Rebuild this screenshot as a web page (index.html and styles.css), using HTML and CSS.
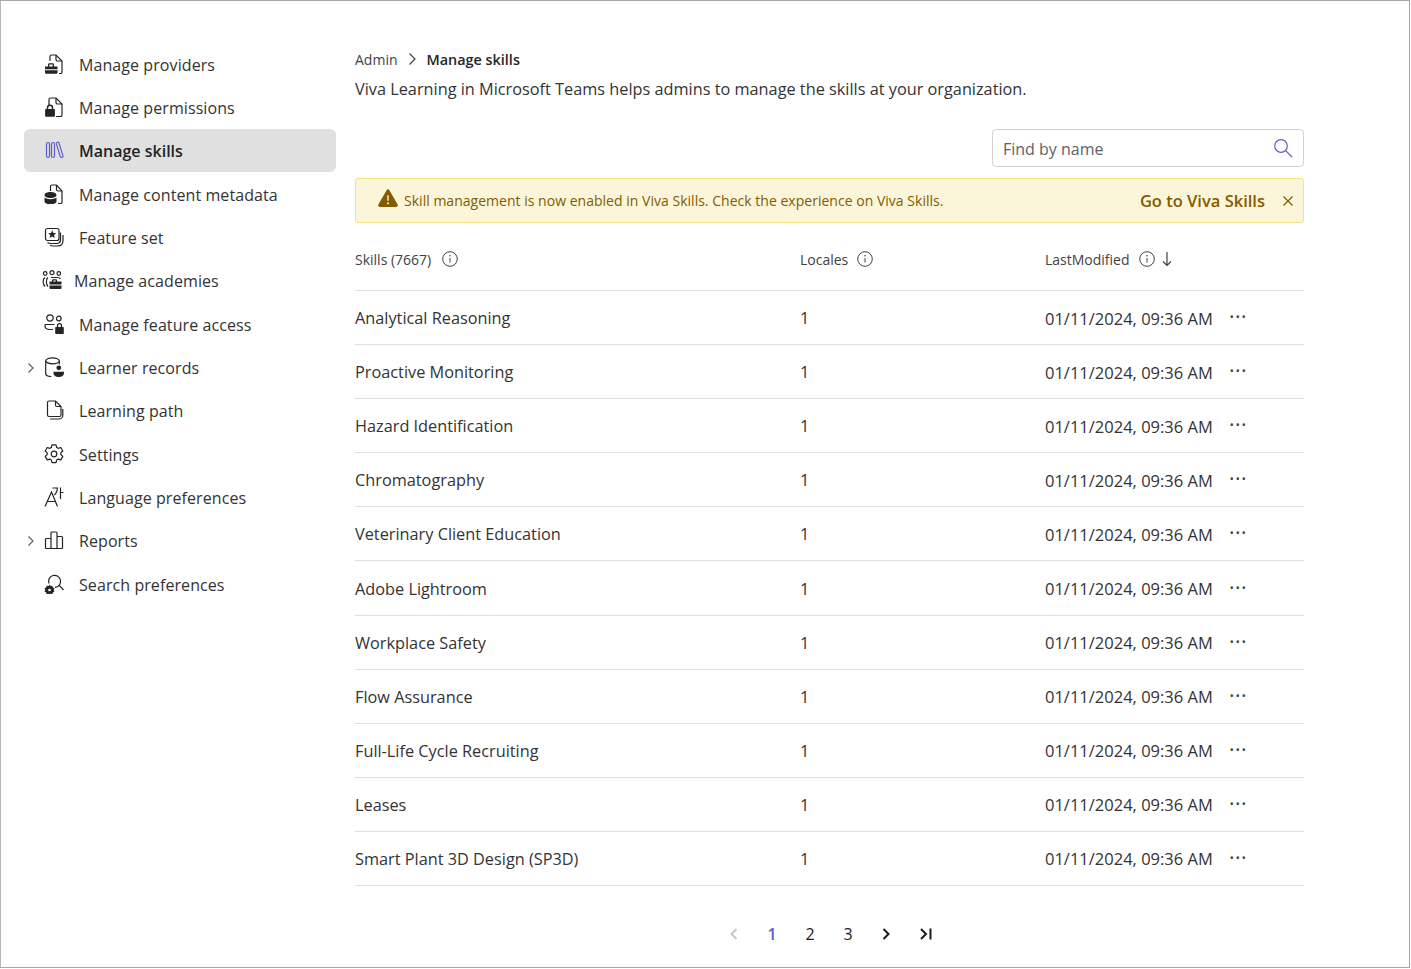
FILE: index.html
```html
<!DOCTYPE html>
<html lang="en">
<head>
  <meta charset="UTF-8">
  <title>Manage skills</title>
  <link rel="stylesheet" href="styles.css">
</head>
<body>
  <div class="frame">
    <nav class="sidebar">
      <a class="nav-item">
        <svg class="nav-icon" viewBox="0 0 20 20"><path d="M6 7V2.500A1.500 1.500 0 0 1 7.500 1H12l6 6v11a1.500 1.500 0 0 1-1.500 1.500H15"/><path d="M12 1v4.500a1.500 1.500 0 0 0 1.500 1.500H18"/><path class="solid" d="M1 12.500h3V10.500a1.200 1.200 0 0 1 1.200-1.200h3.600A1.200 1.200 0 0 1 10 10.500v2h3.500v2.800H1zM1 16.300h12.500V18.500a1.200 1.200 0 0 1-1.200 1.200H2.200A1.200 1.200 0 0 1 1 18.500zM5.300 10.600v1.900h3.400v-1.900z"/></svg>
        Manage providers
      </a>
      <a class="nav-item">
        <svg class="nav-icon" viewBox="0 0 20 20"><path d="M5 8V2.500A1.500 1.500 0 0 1 6.500 1H12l6 6v11a1.500 1.500 0 0 1-1.500 1.500H12"/><path d="M12 1v4.500a1.500 1.500 0 0 0 1.500 1.500H18"/><path d="M3.500 12v-1.200a2.500 2.500 0 0 1 5 0V12" stroke-width="1.500"/><path class="solid" d="M2 12h8a.9.9 0 0 1 .9.9v5.900a.9.9 0 0 1-.9.9H2a.9.9 0 0 1-.9-.9v-5.900A.9.9 0 0 1 2 12z"/></svg>
        Manage permissions
      </a>
      <a class="nav-item is-active">
        <svg class="nav-icon" viewBox="0 0 20 20"><rect x="2.500" y="2.500" width="3" height="15" rx="1.500"/><rect x="7.500" y="2.500" width="3" height="15" rx="1.500"/><path d="M12.300 3.700a1.400 1.400 0 0 1 2.600-.8l4 12.700a1.400 1.400 0 0 1-2.700.8z"/></svg>
        Manage skills
      </a>
      <a class="nav-item">
        <svg class="nav-icon" viewBox="0 0 20 20"><path d="M6.500 7V2.500A1.500 1.500 0 0 1 8 1h4.500l5.500 6v11a1.500 1.500 0 0 1-1.500 1.500H14"/><path d="M12.500 1v4.500A1.500 1.500 0 0 0 14 7h4"/><path class="solid" d="M.5 11c0-1.700 2.700-3 6-3s6 1.300 6 3-2.700 3-6 3-6-1.300-6-3zM.5 13.500c1.400 1.100 3.600 1.700 6 1.700s4.600-.6 6-1.700V17.500c0 1.700-2.700 2.800-6 2.800s-6-1.100-6-2.800z"/></svg>
        Manage content metadata
      </a>
      <a class="nav-item">
        <svg class="nav-icon" viewBox="0 0 20 20"><rect x="1.500" y="1.500" width="13.500" height="12" rx="2"/><path d="M3.500 15.500c1 .8 2 1 3 1h6c2.500 0 4-1.500 4-4V5.500"/><path d="M6 18.300c1 .5 2 .7 3 .7h4.500c3.500 0 5.500-2 5.500-5.500V8"/><path class="solid" d="M8.200 3.300l1.200 2.700 2.800.2-2.100 1.900.6 2.800-2.500-1.500-2.500 1.500.6-2.800-2.100-1.900 2.800-.2z"/></svg>
        Feature set
      </a>
      <a class="nav-item nav-item-tight">
        <svg class="nav-icon" viewBox="0 0 20 20" stroke-width="1"><circle cx="3.200" cy="3.500" r="1.800"/><circle cx="10" cy="2.700" r="2"/><circle cx="16.800" cy="3.500" r="1.800"/><path d="M3 7.500C.5 9 .5 14 3 16.500M6 7.500c-2.200 1.500-2.200 6.500 0 9"/><path d="M9 7.500h6c1.500 0 3 .5 3.500 1.500"/><path class="solid" d="M7.500 11.500H10V10.300a1 1 0 0 1 1-1h3a1 1 0 0 1 1 1v1.200h4.500v3h-12zM7.500 15.500h12V18a1 1 0 0 1-1 1h-10a1 1 0 0 1-1-1zM11.200 10.400v1.100h2.600v-1.100z"/></svg>
        Manage academies
      </a>
      <a class="nav-item">
        <svg class="nav-icon" viewBox="0 0 20 20"><circle cx="6" cy="4" r="3.200"/><circle cx="14.800" cy="4.500" r="2.300"/><path d="M1 10.500h9.500M1 10.500v1.200c0 2.300 2.200 3.800 5 3.800h3"/><path d="M13.500 13v-1.300a2 2 0 0 1 4 0V13" stroke-width="1.300"/><path class="solid" d="M12 13h7a.8.800 0 0 1 .8.8v5.400a.8.800 0 0 1-.8.8h-7a.8.800 0 0 1-.8-.8v-5.400A.8.800 0 0 1 12 13z"/></svg>
        Manage feature access
      </a>
      <a class="nav-item">
        <svg class="nav-caret" viewBox="0 0 8 12"><path d="M1.500 1.500L6 6l-4.500 4.500"/></svg>
        <svg class="nav-icon" viewBox="0 0 20 20"><ellipse cx="8.500" cy="3.800" rx="6.800" ry="3"/><path d="M1.700 3.800v12.700c0 1.800 2.500 3 5.500 3M15.300 3.800v3.700"/><circle class="solid" cx="14.800" cy="10.800" r="2.400"/><path class="solid" d="M9.500 14.800h10.500V16c0 2.500-2.200 4-5.200 4s-5.300-1.500-5.300-4z"/></svg>
        Learner records
      </a>
      <a class="nav-item">
        <svg class="nav-icon" viewBox="0 0 20 20"><path d="M3.500 2.500A1.500 1.500 0 0 1 5 1h6.500l5.500 5.500V15a1.500 1.500 0 0 1-1.500 1.500H5A1.500 1.500 0 0 1 3.500 15z"/><path d="M11.500 1v4A1.500 1.500 0 0 0 13 6.500h4"/><path d="M6 19h9c2 0 3.800-1.600 3.800-3.800V9"/></svg>
        Learning path
      </a>
      <a class="nav-item">
        <svg class="nav-icon" viewBox="0 0 20 20"><circle cx="10" cy="10" r="2.800"/><path d="M8 .8h4l.7 2.700 1.400.8 2.700-.8 2 3.500-2 1.900v1.600l2 1.900-2 3.500-2.700-.8-1.400.8-.7 2.700H8l-.7-2.700-1.400-.8-2.700.8-2-3.500 2-1.900V8.900l-2-1.900 2-3.500 2.700.8 1.400-.8z" stroke-linejoin="round"/></svg>
        Settings
      </a>
      <a class="nav-item">
        <svg class="nav-icon" viewBox="0 0 20 20"><path d="M1 19.500L7.500 5l6 14.500M3.300 14.500h8.500"/><path d="M8.500 1h4.800c0 3-1 5.500-3 7M16.500 .5V12M16.500 5.500H19.500"/></svg>
        Language preferences
      </a>
      <a class="nav-item">
        <svg class="nav-caret" viewBox="0 0 8 12"><path d="M1.500 1.500L6 6l-4.500 4.500"/></svg>
        <svg class="nav-icon" viewBox="0 0 20 20"><path d="M1.500 18.500h17M1.500 18.500V9.500a1 1 0 0 1 1-1h4.500v10M7 18.500V3a1 1 0 0 1 1-1h4a1 1 0 0 1 1 1v15.500M13 6.500h4.500a1 1 0 0 1 1 1v11"/></svg>
        Reports
      </a>
      <a class="nav-item">
        <svg class="nav-icon" viewBox="0 0 20 20"><path d="M5 9.500A6 6 0 1 1 11 13.300"/><path d="M15 11.200l4.500 4.800"/><path class="solid" d="M5.500 10.500l1 1.500 1.800-.3.600 1.700 1.600.9-.8 1.600.8 1.600-1.600.9-.6 1.700-1.800-.3-1 1.200-1-1.200-1.800.3-.6-1.700-1.600-.9.800-1.600-.8-1.600 1.600-.9.600-1.700 1.800.3z"/><circle cx="5.500" cy="16" r="1.300" fill="#fff" stroke="none"/></svg>
        Search preferences
      </a>
    </nav>

    <main class="content">
      <div class="breadcrumb">
        <span>Admin</span>
        <svg class="crumb-sep" viewBox="0 0 9 14"><path d="M1.500 1.500L7 7l-5.500 5.500"/></svg>
        <strong>Manage skills</strong>
      </div>
      <p class="intro">Viva Learning in Microsoft Teams helps admins to manage the skills at your organization.</p>

      <div class="search-row">
        <div class="search">
          <span class="search-text">Find by name</span>
          <svg class="search-icon" viewBox="0 0 20 20"><circle cx="8" cy="8" r="6.300"/><path d="M12.700 12.700L19 19"/></svg>
        </div>
      </div>

      <div class="banner">
        <svg class="banner-icon" viewBox="0 0 20 18"><path d="M8.600 1.200a1.600 1.600 0 0 1 2.800 0l8.200 14.300a1.600 1.600 0 0 1-1.400 2.400H1.800a1.600 1.600 0 0 1-1.400-2.400z"/><rect class="mark" x="9.300" y="6" width="1.400" height="6" rx=".7"/><circle class="mark" cx="10" cy="14.300" r="1"/></svg>
        <span class="banner-text">Skill management is now enabled in Viva Skills. Check the experience on Viva Skills.</span>
        <a class="banner-link">Go to Viva Skills</a>
        <svg class="banner-close" viewBox="0 0 10 10"><path d="M.5.500l9 9M9.500.500l-9 9"/></svg>
      </div>

      <div class="table-head">
        <div class="th th-first">Skills (7667)
          <svg class="info" viewBox="0 0 16 16"><circle cx="8" cy="8" r="7.300"/><path d="M8 7v4.500"/><circle class="dot" cx="8" cy="4.700" r=".8"/></svg>
        </div>
        <div class="th">Locales
          <svg class="info" viewBox="0 0 16 16"><circle cx="8" cy="8" r="7.300"/><path d="M8 7v4.500"/><circle class="dot" cx="8" cy="4.700" r=".8"/></svg>
        </div>
        <div class="th">LastModified
          <svg class="info" viewBox="0 0 16 16"><circle cx="8" cy="8" r="7.300"/><path d="M8 7v4.500"/><circle class="dot" cx="8" cy="4.700" r=".8"/></svg>
          <svg class="sort" viewBox="0 0 10 16"><path d="M5 1v13.500M1 10.500l4 4 4-4"/></svg>
        </div>
      </div>

      <div class="row"><span>Analytical Reasoning</span><span>1</span><span class="date">01/11/2024, 09:36 AM</span><span class="more">···</span></div>
      <div class="row"><span>Proactive Monitoring</span><span>1</span><span class="date">01/11/2024, 09:36 AM</span><span class="more">···</span></div>
      <div class="row"><span>Hazard Identification</span><span>1</span><span class="date">01/11/2024, 09:36 AM</span><span class="more">···</span></div>
      <div class="row"><span>Chromatography</span><span>1</span><span class="date">01/11/2024, 09:36 AM</span><span class="more">···</span></div>
      <div class="row"><span>Veterinary Client Education</span><span>1</span><span class="date">01/11/2024, 09:36 AM</span><span class="more">···</span></div>
      <div class="row"><span>Adobe Lightroom</span><span>1</span><span class="date">01/11/2024, 09:36 AM</span><span class="more">···</span></div>
      <div class="row"><span>Workplace Safety</span><span>1</span><span class="date">01/11/2024, 09:36 AM</span><span class="more">···</span></div>
      <div class="row"><span>Flow Assurance</span><span>1</span><span class="date">01/11/2024, 09:36 AM</span><span class="more">···</span></div>
      <div class="row"><span>Full-Life Cycle Recruiting</span><span>1</span><span class="date">01/11/2024, 09:36 AM</span><span class="more">···</span></div>
      <div class="row"><span>Leases</span><span>1</span><span class="date">01/11/2024, 09:36 AM</span><span class="more">···</span></div>
      <div class="row"><span>Smart Plant 3D Design (SP3D)</span><span>1</span><span class="date">01/11/2024, 09:36 AM</span><span class="more">···</span></div>

      <div class="pager">
        <svg class="pager-arrow is-off" viewBox="0 0 10 14"><path d="M7.500 2L2.500 7l5 5"/></svg>
        <span class="page is-current">1</span>
        <span class="page">2</span>
        <span class="page">3</span>
        <svg class="pager-arrow" viewBox="0 0 10 14"><path d="M2.500 2l5 5-5 5"/></svg>
        <svg class="pager-arrow pager-last" viewBox="0 0 14 14"><path d="M2 2l5 5-5 5M11.500 1.500v11"/></svg>
      </div>
    </main>
  </div>
</body>
</html>
```

FILE: styles.css
```css
body {
  margin: 0;
  font-family: "Open Sans", "Noto Sans", sans-serif;
  color: #242424;
  background: #fff;
}

svg {
  flex: none;
  fill: none;
  stroke: currentColor;
  stroke-width: 1.2;
}

svg .solid {
  fill: currentColor;
  stroke: none;
}

.frame {
  display: flex;
  box-sizing: border-box;
  width: 1410px;
  height: 968px;
  border: 1px solid #a6a6a6;
  border-left-color: #b4b4b4;
}

/* left nav */
.sidebar {
  width: 312px;
  margin-left: 23px;
  padding-top: 41px;
  flex: none;
}

.nav-item {
  display: flex;
  align-items: center;
  position: relative;
  box-sizing: border-box;
  height: 43.33px;
  padding: 2px 0 0 20px;
  border-radius: 6px;
  font-size: 16px;
  letter-spacing: .08px;
  color: #333;
}

.nav-icon {
  width: 20px;
  height: 20px;
  margin: -2px 15px 0 0;
  color: #242424;
}

.nav-item-tight .nav-icon {
  margin-left: -2px;
  margin-right: 12px;
}

.nav-caret {
  position: absolute;
  left: 3px;
  width: 8px;
  height: 12px;
  color: #616161;
}

.is-active {
  background: #e0e0e0;
  font-weight: 600;
  letter-spacing: 0;
  color: #242424;
}

.is-active .nav-icon {
  color: #5b5fc7;
}

/* main column */
.content {
  width: 949px;
  margin-left: 19px;
  padding-top: 48px;
  flex: none;
}

.breadcrumb {
  display: flex;
  align-items: center;
  height: 20px;
  font-size: 14px;
  color: #424242;
}

.breadcrumb strong {
  font-size: 14.4px;
  font-weight: 600;
  color: #242424;
}

.crumb-sep {
  width: 9px;
  height: 14px;
  margin: 0 10px;
  color: #424242;
}

.intro {
  margin: 8px 0 0;
  font-size: 16.3px;
  line-height: 24px;
  color: #333;
}

.search-row {
  display: flex;
  justify-content: flex-end;
  margin-top: 28px;
}

.search {
  display: flex;
  align-items: center;
  justify-content: space-between;
  box-sizing: border-box;
  width: 312px;
  height: 38px;
  padding: 0 10px;
  border: 1px solid #d1d1d1;
  border-radius: 4px;
}

.search-text {
  padding-top: 1px;
  font-size: 16px;
  color: #616161;
}

.search-icon {
  width: 20px;
  height: 20px;
  color: #5b5fc7;
}

.banner {
  display: flex;
  align-items: center;
  box-sizing: border-box;
  height: 45px;
  margin-top: 11px;
  padding: 0 10px 0 22px;
  background: #fbf6d9;
  border: 1px solid #f2e384;
  border-radius: 3px;
  color: #835b00;
}

.banner-icon {
  width: 20px;
  height: 18px;
  margin: -6px 6px 0 0;
}

.banner-icon path {
  fill: #835b00;
  stroke: none;
}

.banner-icon .mark {
  fill: #fbf6d9;
  stroke: none;
}

.banner-text {
  flex: 1;
  font-size: 14px;
  letter-spacing: .02px;
}

.banner-link {
  font-size: 16.5px;
  font-weight: 600;
}

.banner-close {
  width: 10px;
  height: 10px;
  margin-left: 18px;
}

/* table */
.table-head,
.row {
  display: grid;
  grid-template-columns: 445px 245px 184px 1fr;
  align-items: center;
  border-bottom: 1px solid #e0e0e0;
  box-sizing: border-box;
}

.table-head {
  grid-template-columns: 445px 245px 1fr;
  height: 68px;
  padding-top: 5px;
  font-size: 14px;
  color: #424242;
}

.th {
  display: flex;
  align-items: center;
}

.info {
  width: 16px;
  height: 16px;
  margin-left: 9px;
  stroke-width: 1;
}

.th-first .info {
  margin-left: 11px;
}

.info .dot {
  fill: currentColor;
  stroke: none;
}

.sort {
  width: 10px;
  height: 16px;
  margin-left: 7px;
}

.row {
  height: 54.1px;
  padding-top: 1px;
  font-size: 16.3px;
  color: #333;
}

.date {
  font-size: 16.5px;
}

.more {
  margin-top: -3px;
  font-size: 21px;
  line-height: 1;
  letter-spacing: .5px;
  color: #424242;
}

.pager {
  display: flex;
  align-items: center;
  justify-content: center;
  gap: 28px;
  margin-top: 37px;
  padding-left: 3px;
  font-size: 16px;
  font-weight: 500;
  color: #1a1a1a;
}

.page {
  width: 10px;
  text-align: center;
}

.is-current {
  font-weight: 600;
  color: #5b5fc7;
}

.pager-arrow {
  width: 10px;
  height: 14px;
  stroke-width: 2;
}

.pager-last {
  width: 14px;
}

.is-off {
  color: #c7c7c7;
}
```
